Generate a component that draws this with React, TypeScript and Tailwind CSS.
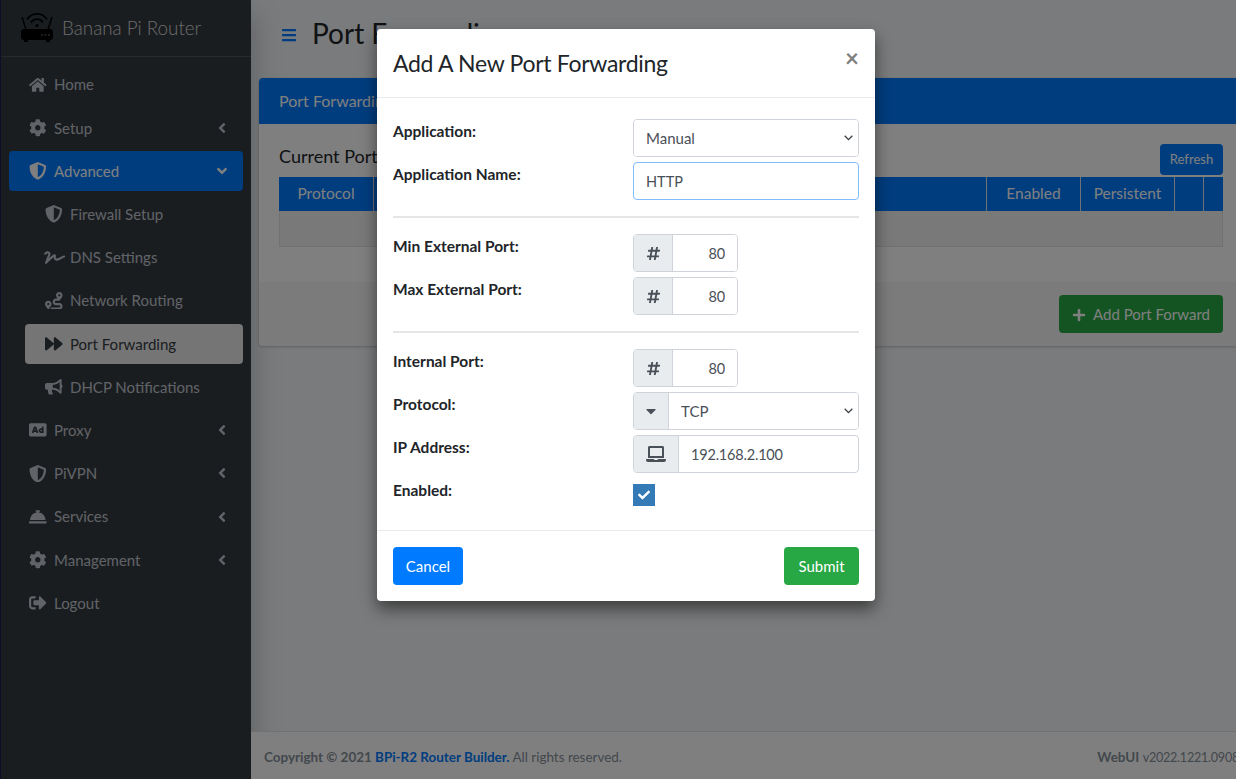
import React from 'react';
import {
  FaAd,
  FaAngleLeft,
  FaBars,
  FaBullhorn,
  FaCaretDown,
  FaCheck,
  FaCog,
  FaConciergeBell,
  FaForward,
  FaHashtag,
  FaHome,
  FaLaptop,
  FaPlus,
  FaRoute,
  FaShieldAlt,
  FaSignature,
  FaSignOutAlt,
} from 'react-icons/fa';
import type { IconType } from 'react-icons';

interface NavEntry {
  label: string;
  icon: IconType;
  iconClass?: string;
  arrow?: 'left' | 'down';
  child?: boolean;
  state?: 'open' | 'current';
}

const navEntries: NavEntry[] = [
  { label: 'Home', icon: FaHome },
  { label: 'Setup', icon: FaCog, arrow: 'left' },
  { label: 'Advanced', icon: FaShieldAlt, arrow: 'down', state: 'open' },
  { label: 'Firewall Setup', icon: FaShieldAlt, child: true },
  { label: 'DNS Settings', icon: FaSignature, iconClass: 'h-[21px] w-auto shrink-0', child: true },
  { label: 'Network Routing', icon: FaRoute, child: true },
  { label: 'Port Forwarding', icon: FaForward, child: true, state: 'current' },
  { label: 'DHCP Notifications', icon: FaBullhorn, child: true },
  { label: 'Proxy', icon: FaAd, arrow: 'left' },
  { label: 'PiVPN', icon: FaShieldAlt, arrow: 'left' },
  { label: 'Services', icon: FaConciergeBell, arrow: 'left' },
  { label: 'Management', icon: FaCog, arrow: 'left' },
  { label: 'Logout', icon: FaSignOutAlt },
];

const RouterLogo = () => (
  <svg viewBox="0 0 33 32" className="w-[33px] h-[32px]" fill="none">
    <path d="M6 7.5 C10.5 0 21.5 0 26 7.5" stroke="#000" strokeWidth="1.8" />
    <path d="M10 10.5 C13 6 19 6 22 10.5" stroke="#000" strokeWidth="1.8" />
    <circle cx="16" cy="13.5" r="1.6" fill="#000" />
    <path d="M1 5 L5 17.5 M31 5 L27 17.5" stroke="#000" strokeWidth="1.5" />
    <rect x="0" y="17" width="32" height="11" rx="3" fill="#000" />
    <rect x="3" y="27" width="4" height="3" fill="#000" />
    <rect x="25" y="27" width="4" height="3" fill="#000" />
    <circle cx="21" cy="23" r="0.9" fill="#555" />
    <circle cx="24.5" cy="23" r="0.9" fill="#555" />
    <circle cx="28" cy="23" r="0.9" fill="#555" />
  </svg>
);

const SidebarItem = ({ entry }: { entry: NavEntry }) => {
  const Icon = entry.icon;
  const tone =
    entry.state === 'open'
      ? 'bg-[#007bff] text-white'
      : entry.state === 'current'
        ? 'bg-[rgba(255,255,255,.9)] text-[#343a40]'
        : 'text-[#c2c7d0]';
  return (
    <li className={entry.child ? 'pl-4' : ''}>
      <div className={`flex items-center h-[40.2px] rounded pl-[19px] pr-[13px] ${tone}`}>
        <span className="w-[20px] mr-[6px] shrink-0 flex items-center justify-center">
          <Icon className={entry.iconClass ?? 'h-[17.6px] w-auto shrink-0'} />
        </span>
        <span className="flex-1 text-[15px]">{entry.label}</span>
        {entry.arrow === 'left' && <FaAngleLeft className="h-4 w-auto" />}
        {entry.arrow === 'down' && <FaAngleLeft className="h-4 w-auto -rotate-90" />}
      </div>
    </li>
  );
};

const Sidebar = () => (
  <aside className="w-[251px] shrink-0 bg-[#343a40] border-l border-[#1a1a4a] shadow-[0_14px_28px_rgba(0,0,0,.25)]">
    <div className="h-[57px] flex items-center gap-2 pl-[20px] border-b border-[#4b545c]">
      <RouterLogo />
      <span className="text-[18.8px] font-light text-[rgba(255,255,255,.8)]">Banana Pi Router</span>
    </div>
    <ul className="flex flex-col gap-[3px] pt-[7.6px] pl-2 pr-2">
      {navEntries.map((entry) => (
        <SidebarItem key={entry.label} entry={entry} />
      ))}
    </ul>
  </aside>
);

const ForwardsCard = () => (
  <section className="ml-2 w-[985px] h-[268px] rounded bg-white shadow-[0_0_1px_rgba(0,0,0,.125),0_1px_3px_rgba(0,0,0,.2)] flex flex-col">
    <div className="h-[46px] shrink-0 bg-[#007bff] text-white rounded-t flex items-center pl-5 text-[16px]">
      Port Forwarding
    </div>
    <div className="flex-1 pl-5 pr-5">
      <div className="flex items-end justify-between w-[944px] mt-5 h-[33px]">
        <span className="text-[18px] text-[#212529] leading-6 mb-[9px]">Current Port Forwards</span>
        <button className="w-[63px] h-[31px] mb-[2px] pt-px rounded bg-[#007bff] text-white text-[13px]">Refresh</button>
      </div>
      <div className="w-[944px] border-b border-r border-l border-[#dee2e6] bg-[rgba(0,0,0,.05)]">
        <div className="flex h-[34px] bg-[#007bff] text-white text-[15.5px] text-center items-center -mr-px -ml-px">
          <div className="w-[95px] h-full flex items-center justify-center border-r border-[#dee2e6]">Protocol</div>
          <div className="w-[613px] h-full border-r border-[#dee2e6]" />
          <div className="w-[94px] h-full flex items-center justify-center border-r border-[#dee2e6]">Enabled</div>
          <div className="w-[94px] h-full flex items-center justify-center border-r border-[#dee2e6]">Persistent</div>
          <div className="w-[29px] h-full border-r border-[#dee2e6]" />
          <div className="flex-1 h-full" />
        </div>
        <div className="h-[35px]" />
      </div>
    </div>
    <div className="h-[64px] shrink-0 bg-[#f7f7f7] rounded-b pl-5 w-full">
      <div className="w-[944px] h-full flex items-center justify-end">
        <button className="w-[164px] h-[38px] pt-px rounded bg-[#28a745] text-white flex items-center justify-center gap-[7px] text-[15px]">
          <FaPlus size={14} />
          Add Port Forward
        </button>
      </div>
    </div>
  </section>
);

const PageFooter = () => (
  <footer className="h-[48px] pt-[3px] shrink-0 bg-white border-t border-[#dee2e6] text-[13.45px] text-[#869099] flex items-center justify-between pl-[13px] whitespace-nowrap w-[988px]">
    <span>
      <b className="font-bold">
        Copyright © 2021 <span className="text-[#007bff]">BPi-R2 Router Builder.</span>
      </b>{' '}
      All rights reserved.
    </span>
    <span>
      <b className="font-bold">WebUI</b>{' '}
      <span className="text-[12.5px] tracking-[-0.2px]">v2022.1221.0908</span>
    </span>
  </footer>
);

const FieldLabel = ({ children }: { children: React.ReactNode }) => (
  <label className="w-[240px] shrink-0 font-bold text-[15.5px] leading-6 text-[#212529]">{children}</label>
);

const Addon = ({ width, children }: { width: string; children: React.ReactNode }) => (
  <span className={`${width} h-full shrink-0 bg-[#e9ecef] border-r border-[#ced4da] flex items-center justify-center text-[#495057]`}>
    {children}
  </span>
);

const SelectBox = ({ value, className }: { value: string; className: string }) => (
  <div className={`relative ${className}`}>
    <select className="appearance-none w-full h-full pl-3 pt-px text-[15px] text-[#495057] bg-white outline-none">
      <option>{value}</option>
    </select>
    <svg viewBox="0 0 9 6" className="absolute right-[5px] top-1/2 -mt-[3px] w-[9px] h-[6px]" fill="none">
      <path d="M0.7 0.8 L4.5 4.6 L8.3 0.8" stroke="#3a4147" strokeWidth="1.3" />
    </svg>
  </div>
);

const PortField = ({ label }: { label: string }) => (
  <div className="flex h-[38px]">
    <FieldLabel>{label}</FieldLabel>
    <div className="w-[105px] h-full flex border border-[#ced4da] rounded overflow-hidden bg-white">
      <Addon width="w-[39px]">
        <FaHashtag size={15} />
      </Addon>
      <input
        readOnly
        value="80"
        className="w-0 flex-1 px-3 pt-px text-right text-[14.5px] tracking-[-0.2px] text-[#495057] outline-none bg-white"
      />
    </div>
  </div>
);

const Divider = () => <hr className="border-0 h-[2px] bg-[#e4e5e6] my-4" />;

const PortModal = () => (
  <div className="absolute left-[377px] top-[29px] w-[498px] h-[572px] bg-white rounded shadow-[0_8px_16px_rgba(0,0,0,.5)] flex flex-col">
    <div className="h-[69px] shrink-0 border-b border-[#e9ecef] pl-4 pr-4 flex justify-between">
      <h4 className="text-[23px] tracking-[-0.3px] text-[#212529] mt-[18px] leading-8">Add A New Port Forwarding</h4>
      <span className="text-[#7f7f7f] text-[24px] font-bold leading-none mt-[17px]">×</span>
    </div>
    <div className="flex-1 pl-4 pr-4 pt-[21px]">
      <div className="flex flex-col gap-[5px]">
        <div className="flex h-[38px]">
          <FieldLabel>Application:</FieldLabel>
          <SelectBox value="Manual" className="w-[226px] h-full border border-[#ced4da] rounded overflow-hidden" />
        </div>
        <div className="flex h-[38px]">
          <FieldLabel>Application Name:</FieldLabel>
          <input
            readOnly
            value="HTTP"
            className="w-[226px] h-full border border-[#80bdff] rounded px-3 pt-px text-[14.5px] text-[#495057] outline-none"
          />
        </div>
      </div>
      <Divider />
      <div className="flex flex-col gap-[5px]">
        <PortField label="Min External Port:" />
        <PortField label="Max External Port:" />
      </div>
      <Divider />
      <div className="flex flex-col gap-[5px]">
        <PortField label="Internal Port:" />
        <div className="flex h-[38px]">
          <FieldLabel>Protocol:</FieldLabel>
          <div className="w-[226px] h-full flex border border-[#ced4da] rounded overflow-hidden">
            <Addon width="w-[35px]">
              <FaCaretDown size={16} />
            </Addon>
            <SelectBox value="TCP" className="flex-1 h-full" />
          </div>
        </div>
        <div className="flex h-[38px]">
          <FieldLabel>IP Address:</FieldLabel>
          <div className="w-[226px] h-full flex border border-[#ced4da] rounded overflow-hidden">
            <Addon width="w-[45px]">
              <FaLaptop size={20} />
            </Addon>
            <input
              readOnly
              value="192.168.2.100"
              className="w-0 flex-1 px-3 pt-px text-[14.5px] tracking-[-0.2px] text-[#495057] outline-none"
            />
          </div>
        </div>
        <div className="flex h-[38px]">
          <FieldLabel>Enabled:</FieldLabel>
          <span className="mt-[6px] w-[22px] h-[22px] bg-[#337ab7] flex items-center justify-center text-white">
            <FaCheck size={12} />
          </span>
        </div>
      </div>
    </div>
    <div className="h-[71px] shrink-0 border-t border-[#e9ecef] pl-4 pr-4 flex items-center justify-between">
      <button className="w-[70px] h-[38px] pt-px rounded bg-[#007bff] text-white text-[15px]">Cancel</button>
      <button className="w-[75px] h-[38px] pt-px rounded bg-[#28a745] text-white text-[15px]">Submit</button>
    </div>
  </div>
);

export default function App() {
  return (
    <div
      className="relative flex w-[1236px] h-[779px] overflow-hidden bg-[#f4f6f9]"
      style={{ fontFamily: 'Lato, "Liberation Sans", sans-serif' }}
    >
      <Sidebar />
      <main className="flex-1 min-w-0 flex flex-col">
        <div className="h-[78px] shrink-0 flex items-start pl-[30px] pt-[15px]">
          <FaBars size={16} className="text-[#007bff] mt-[12px]" />
          <h1 className="ml-[15px] text-[28px] leading-[36px] text-[#212529]">Port Forwarding</h1>
        </div>
        <ForwardsCard />
        <div className="flex-1" />
        <PageFooter />
      </main>
      <div className="absolute inset-0 bg-black/50" />
      <PortModal />
    </div>
  );
}
